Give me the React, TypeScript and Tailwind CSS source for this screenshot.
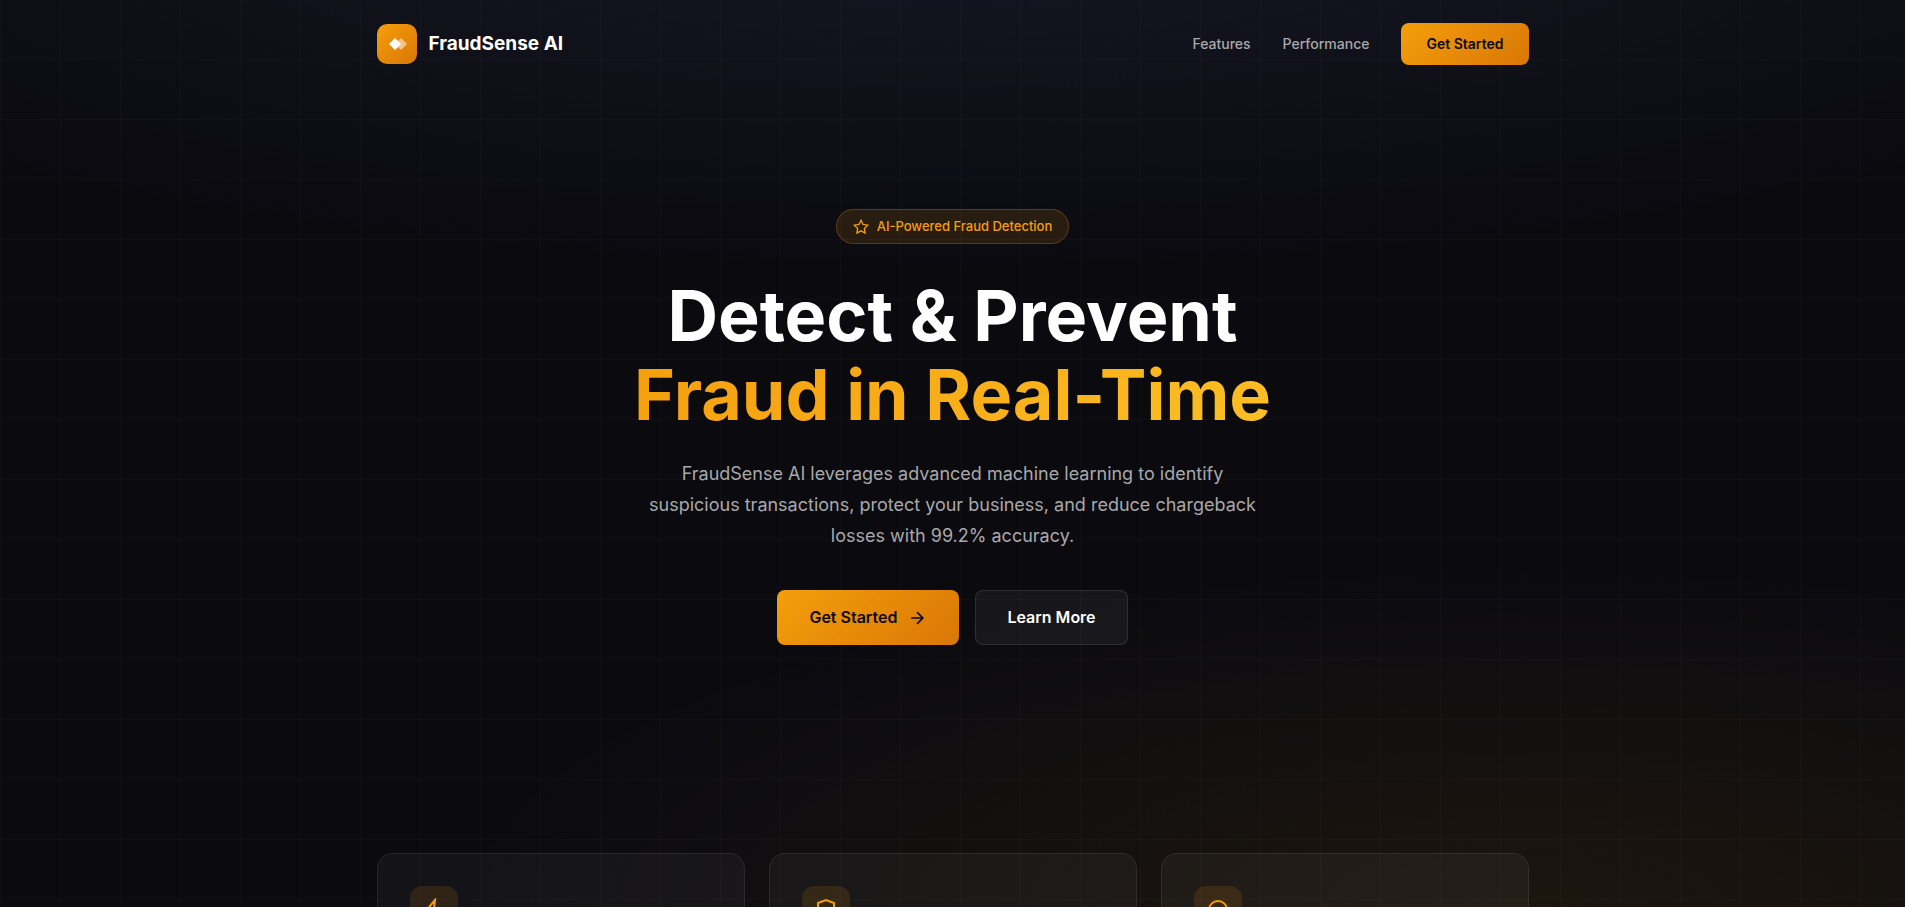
import type { ReactNode } from "react";

interface FeatureCardProps {
  title: string;
  icon: ReactNode;
}

function StrokeIcon({ className, children }: { className: string; children: ReactNode }) {
  return (
    <svg
      viewBox="0 0 24 24"
      fill="none"
      stroke="currentColor"
      strokeWidth="2"
      aria-hidden="true"
      className={className}
    >
      {children}
    </svg>
  );
}

function Logo() {
  return (
    <a href="#" className="flex items-center gap-3">
      <span className="flex size-10 items-center justify-center rounded-[10px] bg-linear-135 from-[#f59e0b] to-[#d97706]">
        <svg viewBox="0 0 40 40" className="size-10" aria-hidden="true">
          <path d="M24 14l6 6-6 6-6-6z" fill="#fff" fillOpacity="0.5" />
          <path d="M18 14l6 6-6 6-6-6z" fill="#fff" />
        </svg>
      </span>
      <span className="text-[19px] font-bold leading-8 text-white">FraudSense AI</span>
    </a>
  );
}

function NavBar() {
  return (
    <nav className="mx-auto flex max-w-[1200px] items-center justify-between px-6 py-[23px]">
      <Logo />
      <div className="flex items-center gap-8">
        <a href="#features" className="text-sm font-medium text-[#a8a8aa]">
          Features
        </a>
        <a href="#performance" className="text-sm font-medium text-[#a8a8aa]">
          Performance
        </a>
        <button
          type="button"
          className="rounded-lg bg-linear-135 from-[#f59e0b] to-[#d97706] px-[25px] py-[11px] text-sm font-semibold text-[#0a0a0f]"
        >
          Get Started
        </button>
      </div>
    </nav>
  );
}

function Hero() {
  return (
    <section className="flex flex-col items-center px-6 py-[121px] text-center">
      <div className="flex items-center gap-2 rounded-full border border-[#f59e0b]/25 bg-[#f59e0b]/12 px-4 py-[7px] text-[13px] font-medium leading-[19px] text-[#f59e0b]">
        <StrokeIcon className="size-4">
          <polygon points="12 2 15.09 8.26 22 9.27 17 14.14 18.18 21.02 12 17.77 5.82 21.02 7 14.14 2 9.27 8.91 8.26 12 2" />
        </StrokeIcon>
        AI-Powered Fraud Detection
      </div>

      <h1 className="mt-8 text-[70px] font-bold leading-[79px] text-white">
        <span className="block">Detect &amp; Prevent</span>
        <span className="block bg-linear-135 from-[#f59e0b] to-[#fbbf24] bg-clip-text text-transparent">
          Fraud in Real-Time
        </span>
      </h1>

      <p className="mt-6 max-w-[620px] text-[18px] leading-[31px] text-[#a8a8aa]">
        FraudSense AI leverages advanced machine learning to identify suspicious
        transactions, protect your business, and reduce chargeback losses with
        99.2% accuracy.
      </p>

      <div className="mt-[39px] flex gap-4">
        <button
          type="button"
          className="flex items-center gap-[10px] rounded-lg bg-linear-135 from-[#f59e0b] to-[#d97706] px-8 py-[15px] text-base font-semibold leading-[25px] text-[#0a0a0f]"
        >
          Get Started
          <StrokeIcon className="size-5">
            <path d="M5 12h14M12 5l7 7-7 7" />
          </StrokeIcon>
        </button>
        <button
          type="button"
          className="rounded-lg border border-white/10 bg-white/5 px-[31px] py-[14px] text-base font-semibold leading-[25px] text-white"
        >
          Learn More
        </button>
      </div>
    </section>
  );
}

function FeatureCard({ title, icon }: FeatureCardProps) {
  return (
    <article
      aria-label={title}
      className="h-60 rounded-2xl border border-white/8 bg-white/4 p-8"
    >
      <div className="flex size-12 items-center justify-center rounded-xl bg-[#f59e0b]/12 text-[#f59e0b]">
        {icon}
      </div>
    </article>
  );
}

function Features() {
  return (
    <section
      id="features"
      className="mx-auto grid max-w-[1200px] grid-cols-3 gap-6 px-6 pt-[87px]"
    >
      <FeatureCard
        title="Speed"
        icon={
          <StrokeIcon className="size-6">
            <path d="M13 2L3 14h9l-1 8 10-12h-9l1-8z" />
          </StrokeIcon>
        }
      />
      <FeatureCard
        title="Protection"
        icon={
          <StrokeIcon className="size-6">
            <path d="M12 22s8-4 8-10V5l-8-3-8 3v7c0 6 8 10 8 10z" />
          </StrokeIcon>
        }
      />
      <FeatureCard
        title="Monitoring"
        icon={
          <StrokeIcon className="size-6">
            <circle cx="12" cy="12" r="9" />
          </StrokeIcon>
        }
      />
    </section>
  );
}

export default function App() {
  return (
    <div className="relative isolate h-screen overflow-hidden bg-[#0a0a0f] font-['Inter',sans-serif]">
      {/* ambient glow */}
      <div className="absolute inset-0 -z-10 bg-[radial-gradient(ellipse_80%_50%_at_50%_-20%,rgba(120,119,198,0.15),transparent),radial-gradient(ellipse_60%_40%_at_80%_100%,rgba(245,158,11,0.08),transparent)]" />
      {/* grid lines */}
      <div className="absolute inset-0 -z-10 bg-[linear-gradient(rgba(255,255,255,0.02)_1px,transparent_1px),linear-gradient(90deg,rgba(255,255,255,0.02)_1px,transparent_1px)] bg-size-[60px_60px] bg-position-[0_-1px]" />
      <NavBar />
      <main>
        <Hero />
        <Features />
      </main>
    </div>
  );
}
